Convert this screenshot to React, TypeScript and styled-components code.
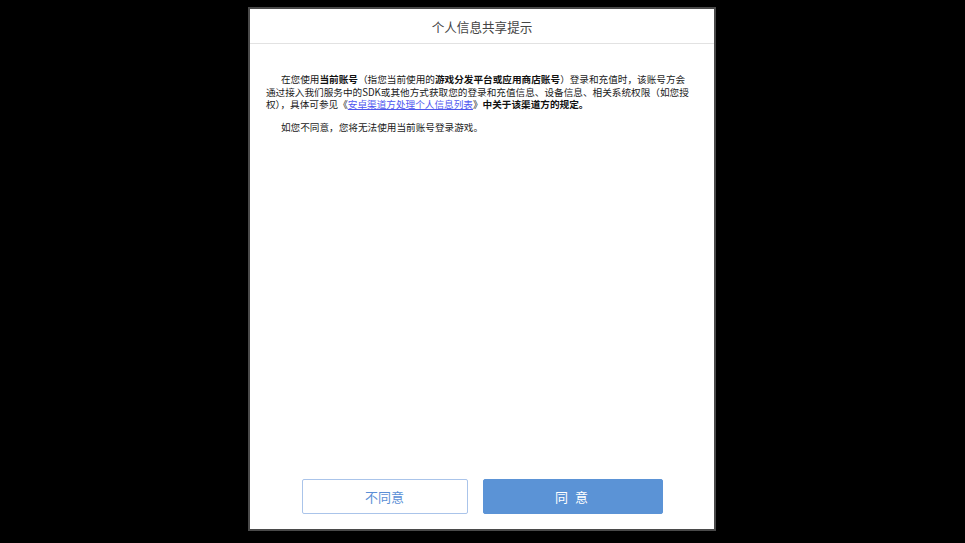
import styled, { createGlobalStyle } from 'styled-components';

const GlobalStyle = createGlobalStyle`
    html, body {
        margin: 0;
        padding: 0;
        background: #000;
    }
    body {
        font-family: "Noto Sans CJK SC", "Noto Sans", sans-serif;
    }
`;

const Screen = styled.div`
    width: 965px;
    height: 543px;
    display: flex;
    justify-content: flex-start;
    align-items: flex-start;
    padding: 7px 0 0 248px;
    box-sizing: border-box;
    background: #000;
`;

const Dialog = styled.div`
    width: 468px;
    height: 524px;
    box-sizing: border-box;
    border: 2px solid #4a4a4a;
    background: #fff;
    display: flex;
    flex-direction: column;
`;

const Header = styled.header`
    height: 34px;
    flex-shrink: 0;
    display: flex;
    align-items: center;
    justify-content: center;
    border-bottom: 1px solid #e2e2e2;
`;

const Title = styled.h1`
    margin: 0;
    font-size: 12.6px;
    font-weight: 400;
    color: #444;
`;

const Body = styled.div`
    flex: 1;
    padding: 29px 0 0 16px;
`;

const Paragraph = styled.p`
    width: 425px;
    margin: 0 0 10px;
    font-size: 9.65px;
    line-height: 12.5px;
    color: #1a1a1a;
    text-indent: 15px;
    text-align: left;
`;

const Strong = styled.b`
    font-weight: 700;
    color: #111;
`;

const Policy = styled.a`
    color: #4f57ef;
    text-decoration: underline;
    cursor: pointer;
`;

const Footer = styled.footer`
    display: flex;
    justify-content: center;
    gap: 15px;
    padding: 0 0 15px;
`;

const Button = styled.button<{ $primary?: boolean; $width: number }>`
    width: ${(p) => p.$width}px;
    height: 35px;
    box-sizing: border-box;
    border-radius: 2px;
    border: 1px solid ${(p) => (p.$primary ? '#5b93d6' : '#aac4ea')};
    background: ${(p) => (p.$primary ? '#5b93d6' : '#fff')};
    color: ${(p) => (p.$primary ? '#fff' : '#5b8fd6')};
    font-family: "Noto Sans CJK SC", "Noto Sans", sans-serif;
    font-size: 13px;
    letter-spacing: ${(p) => (p.$primary ? '2px' : '0')};
    cursor: pointer;
    padding: 0;
`;

function App() {
    return (
        <>
            <GlobalStyle />
            <Screen>
                <Dialog>
                    <Header>
                        <Title>个人信息共享提示</Title>
                    </Header>
                    <Body>
                        <Paragraph>
                            在您使用<Strong>当前账号</Strong>（指您当前使用的<Strong>游戏分发平台或应用商店账号</Strong>）登录和充值时，该账号方会通过接入我们服务中的SDK或其他方式获取您的登录和充值信息、设备信息、相关系统权限（如您授权），具体可参见《<Policy>安卓渠道方处理个人信息列表</Policy>》<Strong>中关于该渠道方的规定。</Strong>
                        </Paragraph>
                        <Paragraph>
                            如您不同意，您将无法使用当前账号登录游戏。
                        </Paragraph>
                    </Body>
                    <Footer>
                        <Button $width={166}>不同意</Button>
                        <Button $primary $width={180}>同 意</Button>
                    </Footer>
                </Dialog>
            </Screen>
        </>
    );
}

export default App;
